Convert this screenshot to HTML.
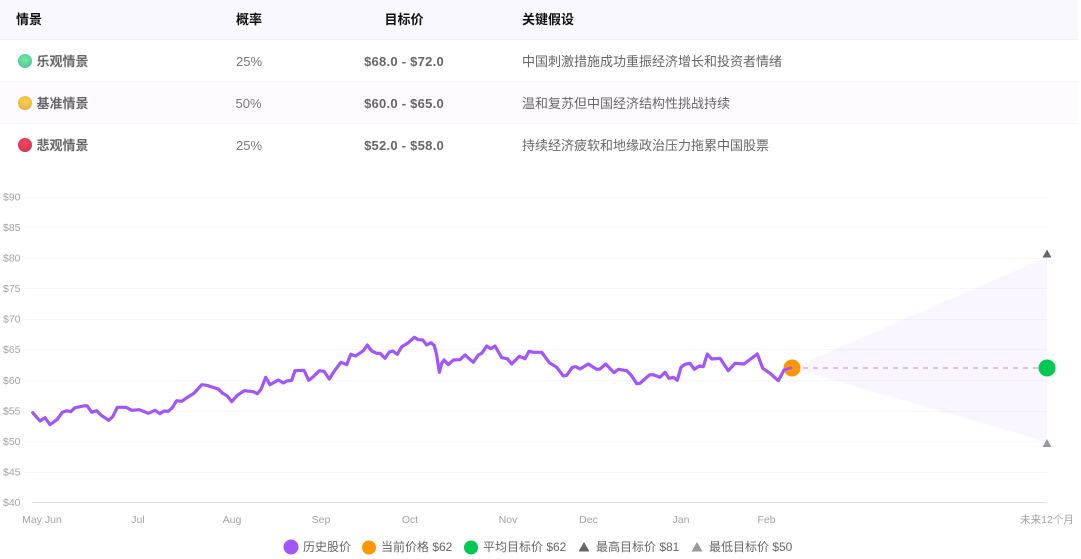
<!DOCTYPE html>
<html>
<head>
<meta charset="utf-8">
<style>
html,body{margin:0;padding:0;background:#fff;}
body{width:1081px;height:559px;position:relative;overflow:hidden;font-family:"Liberation Sans","Noto Sans CJK SC",sans-serif;}
.bar{position:absolute;left:0;width:1078px;}
.t{position:absolute;white-space:nowrap;font-size:13px;line-height:16px;}
.h{font-weight:700;color:#111;}
.n{font-weight:700;color:#666;}
.p{color:#777;font-size:13px;}
.v{font-weight:700;color:#666;font-size:13px;text-align:center;width:120px;letter-spacing:.25px;}
.d{color:#666;}
.dot{position:absolute;left:17.5px;width:14px;height:14px;border-radius:50%;}
svg{position:absolute;left:0;top:0;}
svg text{font-family:"Liberation Sans","Noto Sans CJK SC",sans-serif;}
</style>
</head>
<body>
<div class="bar" style="top:0;height:39px;background:#faf8ff;"></div>
<div class="bar" style="top:39px;height:1px;background:#f3f0fa;"></div>
<div class="bar" style="top:81px;height:1px;background:#f5f3fb;"></div>
<div class="bar" style="top:82px;height:41px;background:#fdfbff;"></div>
<div class="bar" style="top:123px;height:1px;background:#f7f5fc;"></div>

<div class="t h" style="left:16px;top:12px;">情景</div>
<div class="t h" style="left:236px;top:12px;">概率</div>
<div class="t h" style="left:344px;top:12px;width:120px;text-align:center;">目标价</div>
<div class="t h" style="left:522px;top:12px;">关键假设</div>

<div class="dot" style="top:54px;background:radial-gradient(circle at 50% 40%,#72eaa8,#57d49a 55%,#3fb888);"></div>
<div class="t n" style="left:36.5px;top:54px;">乐观情景</div>
<div class="t p" style="left:236px;top:54px;">25%</div>
<div class="t v" style="left:344px;top:54px;">$68.0 - $72.0</div>
<div class="t d" style="left:522px;top:54px;">中国刺激措施成功重振经济增长和投资者情绪</div>

<div class="dot" style="top:96px;background:radial-gradient(circle at 50% 35%,#fad548,#edbc48 55%,#d9a050);"></div>
<div class="t n" style="left:36.5px;top:96px;">基准情景</div>
<div class="t p" style="left:235.5px;top:96px;">50%</div>
<div class="t v" style="left:344px;top:96px;">$60.0 - $65.0</div>
<div class="t d" style="left:522px;top:96px;">温和复苏但中国经济结构性挑战持续</div>

<div class="dot" style="top:138px;background:radial-gradient(circle at 50% 35%,#f4465e,#df3a58 55%,#c03050);"></div>
<div class="t n" style="left:36.5px;top:138px;">悲观情景</div>
<div class="t p" style="left:236px;top:138px;">25%</div>
<div class="t v" style="left:344px;top:138px;">$52.0 - $58.0</div>
<div class="t d" style="left:522px;top:138px;">持续经济疲软和地缘政治压力拖累中国股票</div>

<svg width="1081" height="559" viewBox="0 0 1081 559">
<g stroke="#f7f5fd" stroke-width="1" fill="none">
<line x1="25" x2="1047" y1="197.5" y2="197.5"/>
<line x1="25" x2="1047" y1="227.5" y2="227.5"/>
<line x1="25" x2="1047" y1="258.5" y2="258.5"/>
<line x1="25" x2="1047" y1="288.5" y2="288.5"/>
<line x1="25" x2="1047" y1="319.5" y2="319.5"/>
<line x1="25" x2="1047" y1="349.5" y2="349.5"/>
<line x1="25" x2="1047" y1="380.5" y2="380.5"/>
<line x1="25" x2="1047" y1="411.5" y2="411.5"/>
<line x1="25" x2="1047" y1="441.5" y2="441.5"/>
<line x1="25" x2="1047" y1="472.5" y2="472.5"/>
</g>
<line x1="32" x2="1047" y1="502.5" y2="502.5" stroke="#dfdde6" stroke-width="1"/>
<polygon points="792,368 1047,257 1047,442" fill="#a155ff" fill-opacity="0.05"/>
<line x1="803" y1="368" x2="1038" y2="368" stroke="#dcc0fe" stroke-width="2" stroke-dasharray="5 5"/>

<g fill="#a3a3a3" font-size="10.5" text-anchor="start">
<text x="3" y="200.5">$90</text>
<text x="3" y="231">$85</text>
<text x="3" y="261.5">$80</text>
<text x="3" y="292">$75</text>
<text x="3" y="322.5">$70</text>
<text x="3" y="353">$65</text>
<text x="3" y="384">$60</text>
<text x="3" y="414.5">$55</text>
<text x="3" y="445">$50</text>
<text x="3" y="475.5">$45</text>
<text x="3" y="506">$40</text>
</g>
<g fill="#a3a3a3" font-size="10.5" text-anchor="middle">
<text x="42" y="523">May Jun</text>
<text x="138" y="523">Jul</text>
<text x="232" y="523">Aug</text>
<text x="321" y="523">Sep</text>
<text x="410" y="523">Oct</text>
<text x="508" y="523">Nov</text>
<text x="588.5" y="523">Dec</text>
<text x="681" y="523">Jan</text>
<text x="766.5" y="523">Feb</text>
<text x="1047" y="523">未来12个月</text>
</g>

<polyline fill="none" stroke="#a155ff" stroke-width="3.2" stroke-linejoin="round" stroke-linecap="round" points="32.7,412.7 40,421 45,417.7 50,424.7 57.3,419.3 62.3,412.3 66.7,410.7 70.7,411.7 75,407.7 85,405.7 87.3,406 91.7,412.3 96.7,410.7 101.7,415.7 108.7,420.3 112.7,416.7 117.3,407.3 126,407.3 131.7,410.3 139.3,409.7 148.3,413.3 155,410.3 160,413.7 164,411 168.3,411.3 172.3,407.7 176.7,400.7 181.7,401.3 188.3,396.7 194,393.3 201.7,384.7 206.7,385.3 218.3,389 222.7,393.3 227.3,396 231.7,401.7 237.3,395.3 244.3,390.7 253.3,391.7 257.3,393.7 261,389.3 265.7,377.3 270,384.7 278.3,380 283.3,383 286.7,381 291.7,380.3 295,370.7 304,370.3 308.7,380.3 313.3,376.7 319.3,370.7 324,371.3 329.3,379 335,370 341,362.3 346.7,364.7 350.7,354.3 355.7,356 363.3,350.7 367.3,345 371.7,351 376.7,353.3 380,353.3 385,358.3 389.3,352 392.7,351 397.3,354.3 401.7,346.7 408.3,342.7 414.3,337.3 418.3,339.7 422.7,340 426.7,345 431,342.7 434.3,345.7 436.7,355 439.3,372.3 441.7,363.3 444,360 448.3,364.7 453.3,360 460,359.7 465,355 473.3,362.3 478.3,355 481.7,353.3 486.7,346 490.7,348.7 495,346 501.7,357.7 507.3,358.7 511.7,364 519.3,356.3 525,358.7 529,351.3 533.3,352.3 541.7,352.3 549.3,362.7 556.7,367.3 563.3,376 566.7,375.3 572.3,367.3 575.7,366.7 580,369 588.3,364 596.7,369.3 600,369 605.7,364 614,372.7 618.3,369.3 626.7,370.7 631,375 636.7,383.7 640,383.3 649.3,375 653.3,374.7 660,377.3 665,372.3 669,378.3 673.3,377.3 677.3,380.3 681,367.3 685,364.3 690,363.3 694.3,369.3 699.3,366 703.3,366.7 707.3,354 711.7,359 720,358.3 728.3,370.7 735,363.3 744,364 757.3,354 762.7,368.3 770,373.3 778.3,380.7 784,370 790.7,368"/>

<circle cx="792" cy="368" r="8.5" fill="#ff9500"/>
<polyline fill="none" stroke="#a155ff" stroke-width="3" stroke-linecap="round" points="784,370 790.7,368"/>
<circle cx="1047" cy="368" r="8.5" fill="#00c853"/>
<polygon points="1047,249.5 1051.5,257.5 1042.5,257.5" fill="#666"/>
<polygon points="1047,439 1051.5,447 1042.5,447" fill="#999"/>

<circle cx="291" cy="547" r="7.5" fill="#a155ff"/>
<text x="303" y="551" font-size="12" fill="#666">历史股价</text>
<circle cx="369" cy="547.5" r="7" fill="#ff9500"/>
<text x="381" y="551" font-size="12" fill="#666">当前价格 $62</text>
<circle cx="471" cy="547.5" r="7" fill="#00c853"/>
<text x="483" y="551" font-size="12" fill="#666">平均目标价 $62</text>
<polygon points="584,542 589.5,551.5 578.5,551.5" fill="#666"/>
<text x="596" y="551" font-size="12" fill="#666">最高目标价 $81</text>
<polygon points="697,542 702.5,551.5 691.5,551.5" fill="#999"/>
<text x="709" y="551" font-size="12" fill="#666">最低目标价 $50</text>
</svg>
</body>
</html>
